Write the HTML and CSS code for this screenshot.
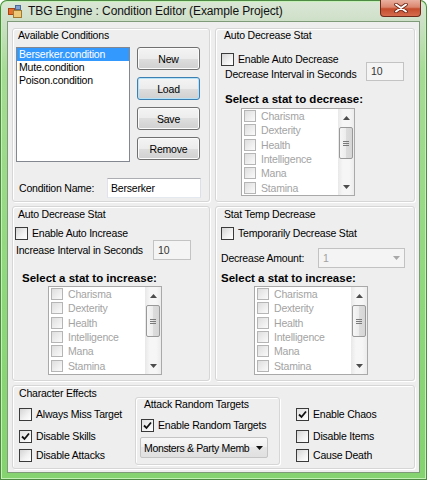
FILE: index.html
```html
<!DOCTYPE html>
<html>
<head>
<meta charset="utf-8">
<title>TBG Engine : Condition Editor</title>
<link rel="stylesheet" href="styles.css">
</head>
<body>
<div class="window">
  <div class="titlebar">
    <svg class="appicon" width="14" height="13" viewBox="0 0 14 13">
      <rect x="7.5" y="0.5" width="5" height="4" fill="#7f9fd0" stroke="#4a6a9a" stroke-width="1"/>
      <rect x="0.5" y="3.5" width="6" height="6" fill="#e4702c" stroke="#a84414" stroke-width="1"/>
      <rect x="5.5" y="5.5" width="8" height="7" fill="#ecc878" stroke="#a07a30" stroke-width="1"/>
    </svg>
    <span class="title">TBG Engine : Condition Editor (Example Project)</span>
    <div class="close">
      <svg width="16" height="10" viewBox="0 0 16 10">
        <path d="M3 1.5 L13 8.5 M13 1.5 L3 8.5" stroke="#6b2414" stroke-width="3.6" stroke-linecap="round"/>
        <path d="M3 1.5 L13 8.5 M13 1.5 L3 8.5" stroke="#ffffff" stroke-width="2" stroke-linecap="round"/>
      </svg>
    </div>
  </div>

  <div class="client">
    <!-- Available Conditions -->
    <section class="group g1">
      <div class="gtitle">Available Conditions</div>
      <div class="avail-body">
        <div class="listbox">
          <div class="li sel">Berserker.condition</div>
          <div class="li">Mute.condition</div>
          <div class="li">Poison.condition</div>
        </div>
        <div class="btns">
          <div class="btn">New</div>
          <div class="btn focus">Load</div>
          <div class="btn">Save</div>
          <div class="btn">Remove</div>
        </div>
      </div>
      <div class="name-row">
        <span class="name-label">Condition Name:</span>
        <div class="tb name-box">Berserker</div>
      </div>
    </section>

    <!-- Auto Decrease Stat (right) -->
    <section class="group g2">
      <div class="gtitle">Auto Decrease Stat</div>
      <div class="cbrow"><span class="cb"></span>Enable Auto Decrease</div>
      <div class="interval">
        <span class="int-label">Decrease Interval in Seconds</span>
        <div class="num">10</div>
      </div>
      <div class="bold">Select a stat to decrease:</div>
      <div class="clist">
        <div class="clist-items">
          <div class="ci"><span class="dcb"></span>Charisma</div>
          <div class="ci"><span class="dcb"></span>Dexterity</div>
          <div class="ci"><span class="dcb"></span>Health</div>
          <div class="ci"><span class="dcb"></span>Intelligence</div>
          <div class="ci"><span class="dcb"></span>Mana</div>
          <div class="ci"><span class="dcb"></span>Stamina</div>
        </div>
        <div class="sb">
          <div class="sb-arrow"><svg width="7" height="4" viewBox="0 0 7 4"><path d="M0 4 L3.5 0 L7 4 Z" fill="#4d4d4d"/></svg></div>
          <div class="sb-thumb"><i></i><i></i><i></i></div>
          <div class="sb-track"></div>
          <div class="sb-arrow"><svg width="7" height="4" viewBox="0 0 7 4"><path d="M0 0 L3.5 4 L7 0 Z" fill="#4d4d4d"/></svg></div>
        </div>
      </div>
    </section>

    <!-- Auto Decrease Stat (left, increase) -->
    <section class="group g3">
      <div class="gtitle">Auto Decrease Stat</div>
      <div class="cbrow"><span class="cb"></span>Enable Auto Increase</div>
      <div class="interval">
        <span class="int-label">Increase Interval in Seconds</span>
        <div class="num">10</div>
      </div>
      <div class="bold">Select a stat to increase:</div>
      <div class="clist">
        <div class="clist-items">
          <div class="ci"><span class="dcb"></span>Charisma</div>
          <div class="ci"><span class="dcb"></span>Dexterity</div>
          <div class="ci"><span class="dcb"></span>Health</div>
          <div class="ci"><span class="dcb"></span>Intelligence</div>
          <div class="ci"><span class="dcb"></span>Mana</div>
          <div class="ci"><span class="dcb"></span>Stamina</div>
        </div>
        <div class="sb">
          <div class="sb-arrow"><svg width="7" height="4" viewBox="0 0 7 4"><path d="M0 4 L3.5 0 L7 4 Z" fill="#4d4d4d"/></svg></div>
          <div class="sb-thumb"><i></i><i></i><i></i></div>
          <div class="sb-track"></div>
          <div class="sb-arrow"><svg width="7" height="4" viewBox="0 0 7 4"><path d="M0 0 L3.5 4 L7 0 Z" fill="#4d4d4d"/></svg></div>
        </div>
      </div>
    </section>

    <!-- Stat Temp Decrease -->
    <section class="group g4">
      <div class="gtitle">Stat Temp Decrease</div>
      <div class="cbrow"><span class="cb"></span>Temporarily Decrease Stat</div>
      <div class="amount">
        <span class="amt-label">Decrease Amount:</span>
        <div class="combo disabled">
          <span class="combo-text">1</span>
          <span class="combo-arrow"><svg width="7" height="4" viewBox="0 0 7 4"><path d="M0 0 L3.5 4 L7 0 Z" fill="#a8a8a8"/></svg></span>
        </div>
      </div>
      <div class="bold">Select a stat to increase:</div>
      <div class="clist">
        <div class="clist-items">
          <div class="ci"><span class="dcb"></span>Charisma</div>
          <div class="ci"><span class="dcb"></span>Dexterity</div>
          <div class="ci"><span class="dcb"></span>Health</div>
          <div class="ci"><span class="dcb"></span>Intelligence</div>
          <div class="ci"><span class="dcb"></span>Mana</div>
          <div class="ci"><span class="dcb"></span>Stamina</div>
        </div>
        <div class="sb">
          <div class="sb-arrow"><svg width="7" height="4" viewBox="0 0 7 4"><path d="M0 4 L3.5 0 L7 4 Z" fill="#4d4d4d"/></svg></div>
          <div class="sb-thumb"><i></i><i></i><i></i></div>
          <div class="sb-track"></div>
          <div class="sb-arrow"><svg width="7" height="4" viewBox="0 0 7 4"><path d="M0 0 L3.5 4 L7 0 Z" fill="#4d4d4d"/></svg></div>
        </div>
      </div>
    </section>

    <!-- Character Effects -->
    <section class="group g5">
      <div class="col1">
        <div class="gtitle">Character Effects</div>
        <div class="cbrow"><span class="cb"></span>Always Miss Target</div>
        <div class="cbrow"><span class="cb checked"><svg width="11" height="11" viewBox="0 0 11 11"><path d="M2 5.5 L4.5 8 L9 2.5" stroke="#111" stroke-width="1.8" fill="none"/></svg></span>Disable Skills</div>
        <div class="cbrow"><span class="cb"></span>Disable Attacks</div>
      </div>
      <div class="group inner">
        <div class="gtitle">Attack Random Targets</div>
        <div class="cbrow"><span class="cb checked"><svg width="11" height="11" viewBox="0 0 11 11"><path d="M2 5.5 L4.5 8 L9 2.5" stroke="#111" stroke-width="1.8" fill="none"/></svg></span>Enable Random Targets</div>
        <div class="combo combo2">
          <span class="combo-text">Monsters &amp; Party Memb</span>
          <span class="combo-arrow"><svg width="7" height="4" viewBox="0 0 7 4"><path d="M0 0 L3.5 4 L7 0 Z" fill="#111"/></svg></span>
        </div>
      </div>
      <div class="col3">
        <div class="cbrow"><span class="cb checked"><svg width="11" height="11" viewBox="0 0 11 11"><path d="M2 5.5 L4.5 8 L9 2.5" stroke="#111" stroke-width="1.8" fill="none"/></svg></span>Enable Chaos</div>
        <div class="cbrow"><span class="cb"></span>Disable Items</div>
        <div class="cbrow"><span class="cb"></span>Cause Death</div>
      </div>
    </section>
  </div>
</div>
</body>
</html>
```

FILE: styles.css
```css
* { box-sizing: border-box; }
html, body { margin: 0; padding: 0; }
body {
  width: 427px;
  height: 480px;
  overflow: hidden;
  background: #ffffff;
  font-family: "Liberation Sans", Arial, sans-serif;
  font-size: 10.5px;
  letter-spacing: -0.2px;
  color: #000;
}

.window {
  width: 427px;
  height: 480px;
  border-radius: 7px 7px 0 0;
  background: linear-gradient(180deg, #dbe7d6 0, #cfe0c9 20px, #a6dc95 70px, #8ed87b 300px, #84d270 100%);
  box-shadow: inset 0 0 0 1px #4e8a44, inset 0 0 0 2px #c4f2b6;
  padding-bottom: 8px;
  display: flex;
  flex-direction: column;
}

.titlebar {
  height: 22px;
  display: flex;
  align-items: center;
  padding-left: 8px;
  flex: none;
}
.appicon { flex: none; }
.title {
  margin-left: 6px;
  font-size: 12px;
  letter-spacing: -0.1px;
  color: #111;
  white-space: nowrap;
}
.close {
  margin-left: auto;
  margin-right: 6px;
  align-self: flex-start;
  width: 41px;
  height: 17px;
  border: 1px solid #6e2a1a;
  border-top: none;
  border-radius: 0 0 4px 4px;
  background: linear-gradient(180deg, #eab0a0 0, #da866e 45%, #c44c2d 55%, #d56c4d 100%);
  display: flex;
  align-items: center;
  justify-content: center;
  flex: none;
}

.client {
  margin: 0 8px;
  height: 450px;
  background: #eeeeee;
  outline: 1px solid #7f9a79;
  padding: 6px 4px 3px;
  display: grid;
  grid-template-columns: 198px 200px;
  grid-template-rows: 174px 175px 84px;
  gap: 4px 5px;
}

.group {
  border: 1px solid #d6d6d6;
  border-radius: 3px;
  box-shadow: inset 1px 1px 0 #ffffff, 1px 1px 0 #ffffff;
  display: flex;
  flex-direction: column;
  align-items: flex-start;
}
.gtitle {
  height: 13px;
  line-height: 13px;
  white-space: nowrap;
}
.bold {
  font-weight: bold;
  font-size: 11.5px;
  letter-spacing: 0;
  height: 14px;
  line-height: 14px;
  white-space: nowrap;
}

/* checkbox */
.cbrow {
  display: flex;
  align-items: center;
  height: 14px;
  white-space: nowrap;
}
.cb {
  width: 13px;
  height: 13px;
  border: 1px solid #3a3a3a;
  background: linear-gradient(135deg, #d4d4d4 0, #f2f2f2 60%, #ffffff 100%);
  margin-right: 4px;
  flex: none;
  display: flex;
  align-items: center;
  justify-content: center;
}
.cb.checked { background: linear-gradient(135deg, #e0e0e0, #ffffff); }

/* text boxes */
.tb {
  background: #ffffff;
  border: 1px solid;
  border-color: #abadb3 #dbdfe6 #e3e9ef #e2e3ea;
  white-space: nowrap;
}
.num {
  width: 38px;
  height: 19px;
  background: #f4f4f4;
  border: 1px solid #c3c3c3;
  color: #333;
  padding-left: 4px;
  line-height: 17px;
}

/* ---- group 1 ---- */
.g1 .gtitle { margin-left: 5px; }
.avail-body {
  display: flex;
  margin: 5px 0 0 3px;
}
.listbox {
  width: 114px;
  height: 115px;
  background: #ffffff;
  border: 1px solid #828790;
  flex: none;
}
.li {
  height: 12.5px;
  line-height: 12.5px;
  padding-left: 2px;
  white-space: nowrap;
}
.li.sel {
  background: #3399ff;
  color: #ffffff;
  height: 13px;
  line-height: 13px;
}
.btns {
  display: flex;
  flex-direction: column;
  gap: 7px;
  margin-left: 7px;
}
.btn {
  width: 63px;
  height: 23px;
  border: 1px solid #707070;
  border-radius: 3px;
  background: linear-gradient(180deg, #f4f4f4 0, #ececec 50%, #dedede 50%, #d0d0d0 100%);
  box-shadow: inset 0 0 0 1px #fbfbfb;
  display: flex;
  align-items: center;
  justify-content: center;
}
.btn.focus {
  border-color: #3c7fb1;
  box-shadow: inset 0 0 0 1px #b4e2f8;
}
.name-row {
  display: flex;
  align-items: center;
  margin: 16px 0 0 6px;
}
.name-label { width: 88px; white-space: nowrap; }
.name-box {
  width: 94px;
  height: 20px;
  padding-left: 3px;
  line-height: 18px;
}

/* ---- group 2 ---- */
.g2 .gtitle { margin-left: 8px; }
.g2 .cbrow { margin: 10px 0 0 5px; }
.interval { display: flex; }
.g2 .interval {
  align-items: flex-end;
  margin: -4px 0 0 9px;
}
.g2 .int-label { width: 141px; margin-bottom: 1px; white-space: nowrap; }
.g2 .bold { margin: 11px 0 0 9px; }
.g2 .clist { margin: 2px 0 0 25px; height: 88px; }

/* ---- group 3 ---- */
.g3 .gtitle { margin: 1px 0 0 5px; }
.g3 .cbrow { margin: 5px 0 0 2px; }
.g3 .interval {
  align-items: center;
  margin: 0 0 0 3px;
}
.g3 .int-label { width: 137px; white-space: nowrap; }
.g3 .num { height: 20px; line-height: 18px; }
.g3 .bold { margin: 11px 0 0 9px; }
.g3 .clist { margin: 1px 0 0 35px; height: 89px; }

/* ---- group 4 ---- */
.g4 .gtitle { margin: 1px 0 0 8px; }
.g4 .cbrow { margin: 5px 0 0 5px; }
.amount {
  display: flex;
  align-items: center;
  margin: 8px 0 0 5px;
}
.amt-label { width: 97px; white-space: nowrap; }
.g4 .bold { margin: 3px 0 0 5px; }
.g4 .clist { margin: 1px 0 0 38px; height: 89px; }

/* combo */
.combo {
  display: flex;
  align-items: center;
  white-space: nowrap;
}
.combo-text {
  flex: 1;
  padding-left: 4px;
}
.combo-arrow {
  width: 15px;
  flex: none;
  display: flex;
  align-items: center;
  justify-content: center;
}
.combo.disabled {
  width: 87px;
  height: 20px;
  background: #f4f4f4;
  border: 1px solid #c2c2c2;
  color: #a2a2a2;
}
.combo2 {
  width: 128px;
  height: 21px;
  margin: 5px 0 0 4px;
  border: 1px solid #c4c4c4;
  border-radius: 2px;
  background: linear-gradient(180deg, #f8f8f8 0, #efefef 50%, #e6e6e6 50%, #e0e0e0 100%);
}
.combo2 .combo-text { letter-spacing: -0.35px; padding-left: 3px; }
.combo2 .combo-arrow { width: 16px; }

/* checked list */
.clist {
  width: 114px;
  display: flex;
  border: 1px solid #a9a9a9;
  background: #ffffff;
}
.clist-items { flex: 1; }
.ci {
  height: 14.3px;
  display: flex;
  align-items: center;
  color: #a3a3a3;
  white-space: nowrap;
}
.dcb {
  width: 12px;
  height: 12px;
  border: 1px solid #b5b5b5;
  background: linear-gradient(135deg, #dedede 0, #f2f2f2 70%, #fafafa 100%);
  margin: 0 5px 0 2px;
  flex: none;
}
.sb {
  width: 16px;
  display: flex;
  flex-direction: column;
  background: linear-gradient(90deg, #e8e8e8 0, #f6f6f6 30%, #f6f6f6 70%, #ececec 100%);
}
.sb-arrow {
  height: 17px;
  display: flex;
  align-items: center;
  justify-content: center;
  flex: none;
}
.sb-track { flex: 1; }
.sb-thumb {
  margin: 1px 0 0 1px;
  width: 14px;
  height: 32px;
  border: 1px solid #999999;
  border-radius: 2px;
  background: linear-gradient(90deg, #f6f6f6 0, #ececec 50%, #dcdcdc 50%, #d6d6d6 100%);
  display: flex;
  flex-direction: column;
  align-items: center;
  justify-content: center;
  gap: 1px;
  flex: none;
}
.sb-thumb i {
  display: block;
  width: 6px;
  height: 1px;
  background: #7a7a7a;
}

/* ---- group 5 ---- */
.g5 {
  grid-column: 1 / span 2;
  flex-direction: row;
  align-items: flex-start;
}
.col1 {
  width: 122px;
  display: flex;
  flex-direction: column;
  align-items: flex-start;
}
.col1 .gtitle { margin: 1px 0 0 6px; }
.col1 .cbrow { margin-left: 6px; }
.col1 .cbrow:nth-child(2) { margin-top: 7px; }
.col1 .cbrow:nth-child(3) { margin-top: 8px; }
.col1 .cbrow:nth-child(4) { margin-top: 5px; }
.inner {
  width: 145px;
  height: 68px;
  margin-top: 11px;
}
.inner .gtitle { margin-left: 8px; }
.inner .cbrow { margin: 7px 0 0 5px; }
.col3 {
  margin-left: 16px;
  display: flex;
  flex-direction: column;
  align-items: flex-start;
}
.col3 .cbrow:nth-child(1) { margin-top: 21px; }
.col3 .cbrow:nth-child(2) { margin-top: 8px; }
.col3 .cbrow:nth-child(3) { margin-top: 5px; }
```
